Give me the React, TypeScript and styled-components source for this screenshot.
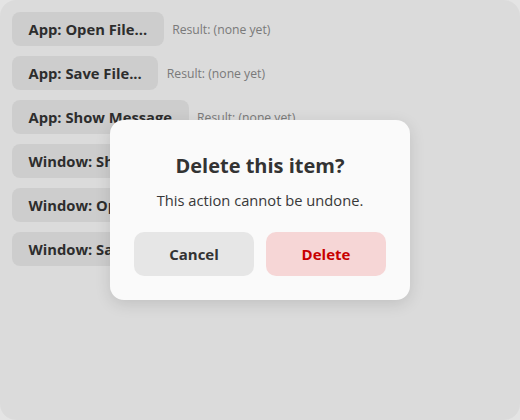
import React from "react";
import styled, { createGlobalStyle } from "styled-components";

const Global = createGlobalStyle`
  html, body { margin: 0; padding: 0; }
  body {
    width: 520px;
    height: 420px;
    overflow: hidden;
    background: #e4e4e4;
    font-family: "Open Sans", "Noto Sans", sans-serif;
  }
`;

const Page = styled.div`
  position: relative;
  width: 520px;
  height: 420px;
  background: #f4f4f4;
  border-radius: 16px;
  box-sizing: border-box;
  padding: 12px;
  display: flex;
  flex-direction: column;
  gap: 10px;
`;

const Row = styled.div`
  display: flex;
  align-items: center;
  gap: 8.5px;
`;

const ActionButton = styled.button`
  height: 34px;
  padding: 0 16.5px;
  border: none;
  border-radius: 8px;
  background: #e5e5e5;
  color: #333;
  font-family: inherit;
  font-size: 14.75px;
  font-weight: 700;
`;

const ResultText = styled.span`
  font-size: 12.2px;
  color: #888;
`;

const Overlay = styled.div`
  position: absolute;
  inset: 0;
  border-radius: 16px;
  background: rgba(0, 0, 0, 0.1);
  display: flex;
  align-items: flex-start;
  justify-content: center;
  padding-top: 120px;
  box-sizing: border-box;
`;

const Dialog = styled.div`
  width: 300px;
  height: 180px;
  box-sizing: border-box;
  background: #fafafa;
  border-radius: 14px;
  box-shadow: 0 4px 16px rgba(0, 0, 0, 0.12);
  padding: 33px 24px 24px;
  display: flex;
  flex-direction: column;
  align-items: center;
`;

const Title = styled.h2`
  margin: 0;
  font-size: 20px;
  line-height: 26px;
  font-weight: 700;
  color: #333;
`;

const Message = styled.p`
  margin: 10px 0 0;
  font-size: 14.7px;
  line-height: 22px;
  color: #383838;
`;

const Actions = styled.div`
  margin-top: auto;
  display: flex;
  gap: 12px;
  width: 100%;
`;

const DialogButton = styled.button<{ $danger?: boolean }>`
  flex: 1;
  height: 44px;
  border: none;
  border-radius: 10px;
  font-family: inherit;
  font-size: 15px;
  font-weight: 700;
  background: ${(p) => (p.$danger ? "#f6d6d6" : "#e6e6e6")};
  color: ${(p) => (p.$danger ? "#c80000" : "#333")};
`;

const actions = [
  "App: Open File...",
  "App: Save File...",
  "App: Show Message",
  "Window: Show Message",
  "Window: Open File...",
  "Window: Save File...",
];

export default function App() {
  return (
    <>
      <Global />
      <Page>
        {actions.map((a) => (
          <Row key={a}>
            <ActionButton>{a}</ActionButton>
            <ResultText>Result: (none yet)</ResultText>
          </Row>
        ))}
        <Overlay>
          <Dialog>
            <Title>Delete this item?</Title>
            <Message>This action cannot be undone.</Message>
            <Actions>
              <DialogButton>Cancel</DialogButton>
              <DialogButton $danger>Delete</DialogButton>
            </Actions>
          </Dialog>
        </Overlay>
      </Page>
    </>
  );
}
